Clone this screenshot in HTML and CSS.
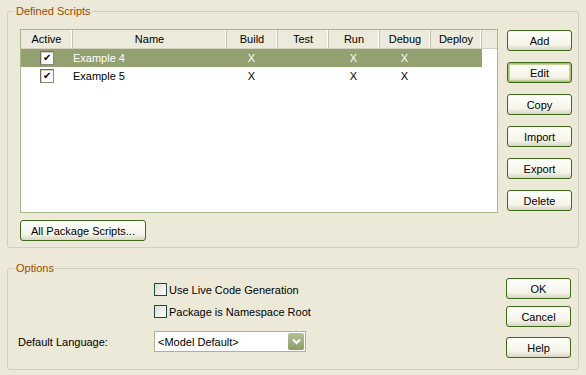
FILE: index.html
```html
<!DOCTYPE html>
<html lang="en">
<head>
  <meta charset="UTF-8" />
  <title>Scripts</title>
  <link rel="stylesheet" href="styles.css">
</head>
<body>
  <div class="group group-scripts">
    <span class="group-title">Defined Scripts</span>
    <div class="scripts-body">
      <div class="scripts-left">
        <div class="list">
          <div class="list-row list-head">
            <div class="col col-active">Active</div>
            <div class="col col-name">Name</div>
            <div class="col">Build</div>
            <div class="col">Test</div>
            <div class="col">Run</div>
            <div class="col">Debug</div>
            <div class="col">Deploy</div>
            <div class="col col-fill"></div>
          </div>
          <div class="list-row item selected">
            <div class="cell col-active"><span class="tick">&#10004;</span></div>
            <div class="cell col-name">Example 4</div>
            <div class="cell">X</div>
            <div class="cell"></div>
            <div class="cell">X</div>
            <div class="cell">X</div>
            <div class="cell"></div>
          </div>
          <div class="list-row item">
            <div class="cell col-active"><span class="tick">&#10004;</span></div>
            <div class="cell col-name">Example 5</div>
            <div class="cell">X</div>
            <div class="cell"></div>
            <div class="cell">X</div>
            <div class="cell">X</div>
            <div class="cell"></div>
          </div>
        </div>
        <button class="btn btn-wide">All Package Scripts...</button>
      </div>
      <div class="btn-col">
        <button class="btn">Add</button>
        <button class="btn btn-default">Edit</button>
        <button class="btn">Copy</button>
        <button class="btn">Import</button>
        <button class="btn">Export</button>
        <button class="btn">Delete</button>
      </div>
    </div>
  </div>

  <div class="group group-options">
    <span class="group-title">Options</span>
    <div class="options-body">
      <div class="options-form">
        <label class="check check-first"><span class="box"></span>Use Live Code Generation</label>
        <label class="check check-second"><span class="box"></span>Package is Namespace Root</label>
        <div class="field-label">Default Language:</div>
        <div class="select">
          <span class="select-text">&lt;Model Default&gt;</span>
          <span class="select-arrow">
            <svg width="9" height="7" viewBox="0 0 9 7"><path d="M1 1.5 L4.5 5 L8 1.5" fill="none" stroke="#fff" stroke-width="2"/></svg>
          </span>
        </div>
      </div>
      <div class="btn-col btn-col-dialog">
        <button class="btn">OK</button>
        <button class="btn btn-cancel">Cancel</button>
        <button class="btn btn-help">Help</button>
      </div>
    </div>
  </div>
</body>
</html>
```

FILE: styles.css
```css
body { margin: 0; padding: 11px 7px 0 7px; background: #ece9d8; font-family: "Liberation Sans", Arial, sans-serif; font-size: 11px; color: #000; }

.group { position: relative; border: 1px solid #d0d0bf; border-radius: 3px; }
.group-title { position: absolute; top: -7px; left: 7px; padding: 0 1px; background: #ece9d8; color: #a04a00; line-height: 13px; }

.group-scripts { height: 235px; }
.scripts-body { display: flex; gap: 9px; padding: 17px 7px 0 12px; }
.scripts-left { width: 478px; }

.list { height: 182px; border: 1px solid #a5b98c; background: #fff; }
.list-row { display: flex; height: 18px; line-height: 18px; }
.list-head { height: 19px; background: #ebeadb; border-bottom: 1px solid #d6d2c2; box-sizing: border-box; }
.list-head .col { width: 50px; text-align: center; border-right: 1px solid #c7c5b2; box-shadow: inset -1px 0 0 #fff; line-height: 19px; }
.list-head .col-active { width: 51px; }
.list-head .col-name { width: 153px; }
.list-head .col-fill { flex: 1; border-right: none; box-shadow: none; }

.item { width: 461px; height: 18px; }
.item .cell { width: 51px; text-align: center; }
.item .col-active { width: 52px; }
.item .col-name { width: 153px; text-align: left; }
.selected { background: #93a070; color: #fff; }

.tick { display: inline-block; width: 12px; height: 12px; margin: 2px 0 0 0; vertical-align: top; background: #fff; border: 1px solid #8a8a7c; border-top-color: #6e6e62; border-left-color: #6e6e62; box-shadow: inset 1px 1px 0 #d4d0c8; color: #000; font-size: 10px; line-height: 12px; text-align: center; }

.btn { display: block; width: 65px; height: 21px; padding: 0; border: 1px solid #3f6a1c; border-radius: 3px; background: linear-gradient(#fffffb, #f5f4ea 70%, #d9d6c4); font-family: inherit; font-size: 11px; color: #000; }
.btn-default { box-shadow: inset 0 0 0 1px #a8c07a, inset 0 0 0 2px #c3d39a; }
.btn-wide { width: 126px; margin-top: 7px; }

.btn-col { display: flex; flex-direction: column; gap: 11px; padding-top: 1px; }

.group-options { margin-top: 20px; height: 100px; }
.options-body { display: flex; justify-content: space-between; padding: 9px 7px 0 10px; }
.options-form { display: grid; grid-template-columns: 136px 200px; grid-template-rows: 22px 26px 21px; align-items: start; padding-top: 5px; }

.check { grid-column: 2; display: flex; align-items: center; height: 13px; white-space: nowrap; }
.check-first { grid-row: 1; }
.check-second { grid-row: 2; }
.box { flex-shrink: 0; width: 11px; height: 11px; margin-right: 2px; border: 1px solid #1e4a3c; background: linear-gradient(135deg, #dcdcd0, #fff); }

.field-label { grid-column: 1; grid-row: 3; align-self: center; }
.select { grid-column: 2; grid-row: 3; display: flex; align-items: center; justify-content: space-between; width: 150px; height: 19px; border: 1px solid #a6b98c; background: #fff; }
.select-text { padding-left: 3px; }
.select-arrow { display: flex; align-items: center; justify-content: center; width: 16px; height: 17px; margin-right: 1px; border-radius: 2px; background: linear-gradient(#b5c19a, #8c9c68); }

.btn-col-dialog { gap: 0; padding-top: 0; }
.btn-cancel { margin-top: 7px; }
.btn-help { margin-top: 10px; }
```
